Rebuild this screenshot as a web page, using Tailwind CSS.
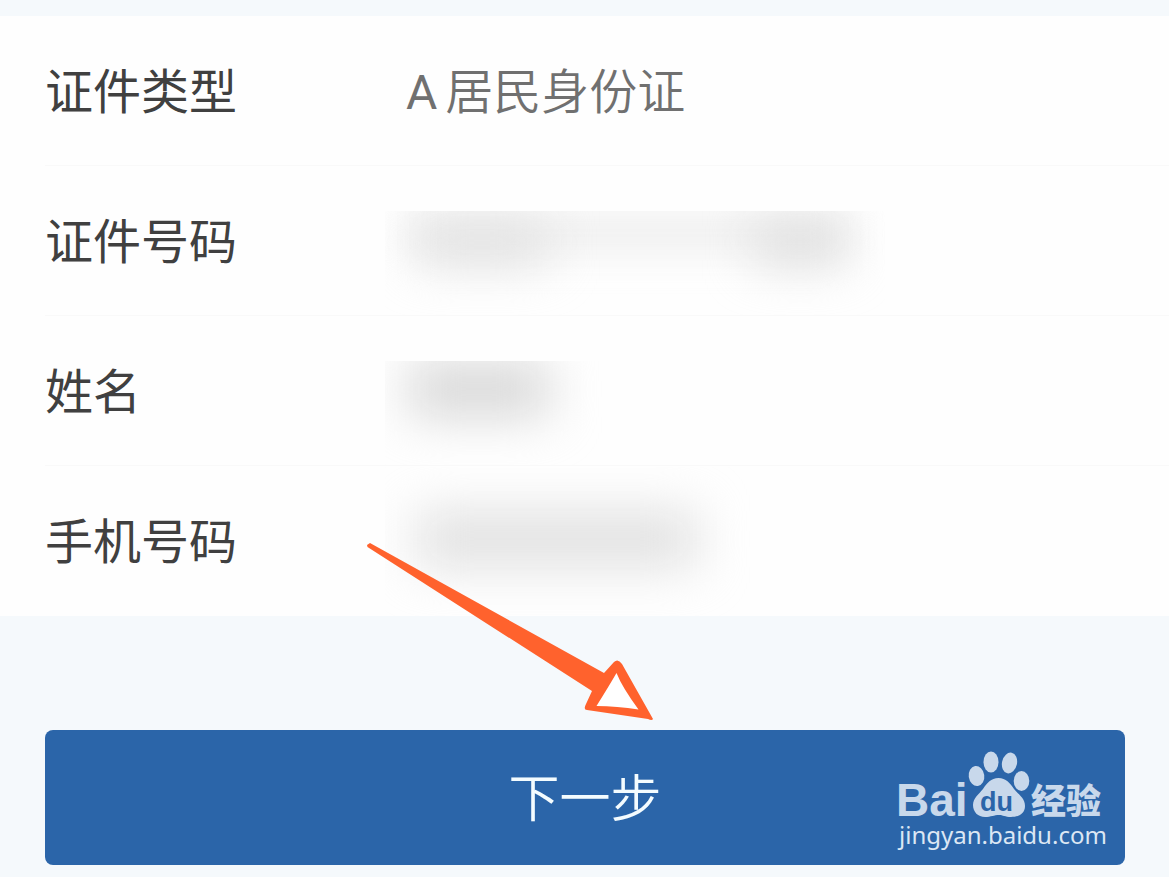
<!DOCTYPE html>
<html lang="zh-CN">
<head>
  <meta charset="UTF-8" />
  <meta name="viewport" content="width=device-width, initial-scale=1.0" />
  <title>证件信息</title>
  <script src="https://cdn.jsdelivr.net/npm/@tailwindcss/browser@4"></script>
</head>
<body class="bg-[#f5f9fc] min-h-screen pt-4 font-[Roboto,'Noto_Sans_CJK_SC',sans-serif]">

  <!-- Info list -->
  <dl class="bg-[#fefefe] pl-[45px] text-5xl leading-none text-[#404040]">
    <div class="flex h-[150px] items-center border-b border-[#f9f9f9]">
      <dt class="w-[361px] shrink-0 pt-1">证件类型</dt>
      <dd class="pt-1 font-[350] text-[#707070]"><span class="mr-2 font-normal">A</span>居民身份证</dd>
    </div>
    <div class="flex h-[150px] items-center border-b border-[#f9f9f9]">
      <dt class="w-[340px] shrink-0 pt-1">证件号码</dt>
      <!-- masked value -->
      <dd class="relative mt-11 h-[104px] w-[500px] overflow-hidden">
        <div class="absolute left-6 top-0 h-11 w-[440px] bg-[#f1f1f1] blur-lg"></div>
        <div class="absolute left-8 top-3 h-10 w-[130px] bg-[#e0e0e0] blur-xl"></div>
        <div class="absolute left-[370px] top-3 h-10 w-[90px] bg-[#dddddd] blur-xl"></div>
      </dd>
    </div>
    <div class="flex h-[150px] items-center border-b border-[#f9f9f9]">
      <dt class="w-[340px] shrink-0 pt-1">姓名</dt>
      <dd class="relative mt-11 h-[104px] w-[240px] overflow-hidden">
        <div class="absolute left-6 top-0 h-14 w-[140px] bg-[#d8d8d8] blur-xl"></div>
      </dd>
    </div>
    <div class="flex h-[150px] items-center">
      <dt class="w-[340px] shrink-0 pt-1">手机号码</dt>
      <dd class="relative h-[149px] w-[480px] overflow-hidden">
        <div class="absolute left-8 top-11 h-14 w-[280px] bg-[#e1e1e1] blur-xl"></div>
      </dd>
    </div>
  </dl>

  <!-- Next step -->
  <div class="relative pl-[45px] pr-11 pt-[114px] pb-3">
    <button type="button" class="block h-[135px] w-full rounded-lg bg-[#2b65a9] pt-1 text-[51px] leading-none font-[350] text-[#f4fcff]">下一步</button>

    <svg class="pointer-events-none absolute left-[360px] -top-20 h-[190px] w-[300px]" viewBox="360 536 300 190" aria-hidden="true">
      <path fill="#ff622d" d="M367 545 L370 543 L604 673 L614 662 Q618 658 622 664 L653 719 Q652 721 648 719 L587 710 Q583 710 586 704 L592 691 L367.500 547 Z" />
      <path fill="#fff" d="M616.500 673 Q622 687 638.500 709.500 Q617 706 596.500 706 Q609 686 616.500 673 Z" />
    </svg>

    <!-- Watermark -->
    <svg class="pointer-events-none absolute right-[54px] bottom-5 h-[110px] w-[220px]" viewBox="895 748 220 110" fill="#c8d8eb">
      <text x="896" y="817" font-family="Liberation Sans" font-weight="700" font-size="46">Bai</text>
      <ellipse cx="976.500" cy="777" rx="7.800" ry="10" transform="rotate(-8 976.500 777)" />
      <ellipse cx="991" cy="763" rx="7.500" ry="10.500" />
      <ellipse cx="1009.500" cy="764" rx="7.500" ry="10.500" transform="rotate(12 1009.500 764)" />
      <ellipse cx="1021.500" cy="782" rx="7.800" ry="10" />
      <path d="M998.500 779 C1006 779 1010 784 1014 790 C1019 796 1025 799 1025 807 C1025 815 1018 818 1011 818 C1005 818 1003 816 999 816 C994 816 991 818 985 818 C978 818 973 813 973 806 C973 799 979 795 983 790 C987 784 991 779 998.500 779 Z" />
      <text x="980" y="812" font-family="Liberation Sans" font-weight="700" font-size="27" fill="#2b65a9">du</text>
      <text x="1031" y="815" font-family="Noto Sans CJK SC" font-weight="900" font-size="35">经验</text>
      <text x="899" y="845" font-family="Noto Sans" font-weight="400" font-size="24" fill="#dce7f4">jingyan.baidu.com</text>
    </svg>
  </div>

</body>
</html>
